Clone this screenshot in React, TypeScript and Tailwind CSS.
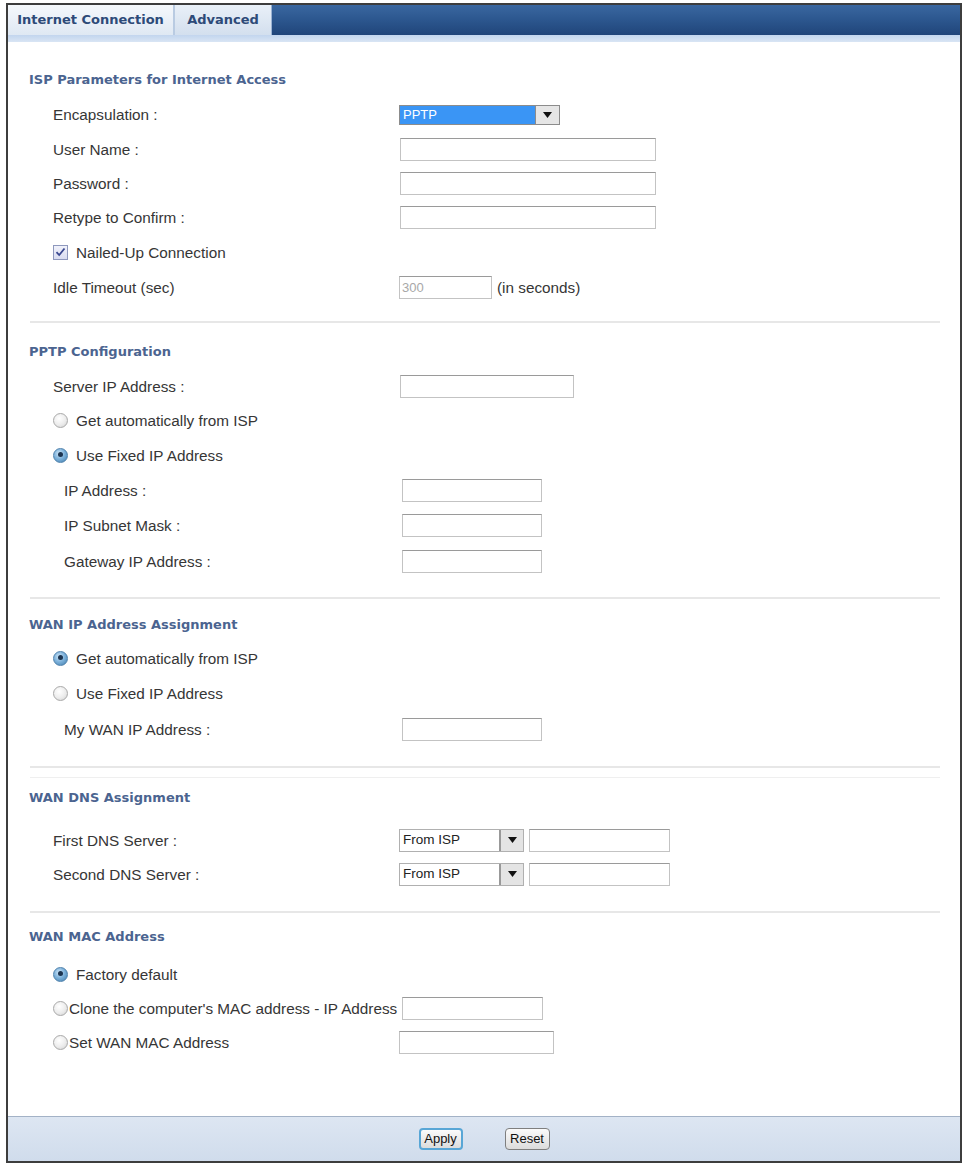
import React from "react";

const LBL = "font-['Liberation_Sans',Arial,sans-serif] text-[15.3px] text-[#363636] whitespace-nowrap";
const HDR = "font-['DejaVu_Sans',Verdana,sans-serif] font-bold text-[13px] text-[#4b6490] whitespace-nowrap";
const TAB = "font-['DejaVu_Sans',Verdana,sans-serif] font-bold text-[13px] text-[#2d4a78] whitespace-nowrap";

function Input({ className, value }: { className: string; value?: string }) {
  return (
    <div
      className={
        "border border-[#c3c3c3] border-t-[#9a9a9a] bg-white flex items-center pl-[2px] font-['Liberation_Sans',Arial,sans-serif] text-[13px] text-[#a8a8a8] " +
        className
      }
    >
      {value}
    </div>
  );
}

function Arrow() {
  return (
    <svg width="9" height="6" viewBox="0 0 9 6">
      <path d="M0 0 H9 L4.5 6 Z" fill="#111" />
    </svg>
  );
}

function Radio({ on }: { on?: boolean }) {
  if (on) {
    return (
      <div className="w-[15px] h-[15px] rounded-full border border-[#4f82ad] bg-[radial-gradient(circle_at_40%_35%,#cfe6f7_0%,#7fb3dc_45%,#3f7cab_100%)] flex items-center justify-center shrink-0">
        <div className="w-[5px] h-[5px] rounded-full bg-[#1c3450] -mt-[2px]" />
      </div>
    );
  }
  return (
    <div className="w-[15px] h-[15px] rounded-full border border-[#a9a9a9] bg-[radial-gradient(circle_at_40%_35%,#ffffff_0%,#ececec_55%,#cfcfcf_100%)] shrink-0" />
  );
}

function Checkbox() {
  return (
    <div className="w-[15px] h-[15px] border border-[#8e98bd] bg-[linear-gradient(180deg,#f1f2fb,#d9dcf0)] flex items-center justify-center shrink-0">
      <svg width="11" height="10" viewBox="0 0 11 10">
        <path d="M1.5 5.2 L4.2 8 L9.5 1.5" fill="none" stroke="#3a4890" strokeWidth="1.8" />
      </svg>
    </div>
  );
}

function Row({
  h,
  label,
  sub,
  children,
}: {
  h: string;
  label?: React.ReactNode;
  sub?: boolean;
  children?: React.ReactNode;
}) {
  return (
    <div className={"grid grid-cols-[391px_1fr] items-center " + h}>
      <div className={(sub ? "pl-[56px] " : "pl-[45px] ") + "pt-[2px] " + LBL}>{label}</div>
      <div className="flex items-center">{children}</div>
    </div>
  );
}

function RadioRow({ h, on, text }: { h: string; on?: boolean; text: string }) {
  return (
    <div className={"flex items-center pl-[45px] " + h}>
      <Radio on={on} />
      <span className={"ml-[8px] pt-[2px] " + LBL}>{text}</span>
    </div>
  );
}

function Header({ h, text }: { h: string; text: string }) {
  return (
    <div className={"flex items-center pl-[21px] " + h}>
      <span className={HDR}>{text}</span>
    </div>
  );
}

function DnsSelect() {
  return (
    <div className="w-[125px] h-[23px] border border-[#b0b0b0] flex">
      <div className="flex-1 flex items-center pl-[3px] font-['Liberation_Sans',Arial,sans-serif] text-[13.5px] text-[#222]">
        From ISP
      </div>
      <div className="w-[24px] bg-[#e4e4e4] border-l-2 border-[#999] flex items-center justify-center">
        <Arrow />
      </div>
    </div>
  );
}

function Sep({ h, pt }: { h: string; pt: string }) {
  return (
    <div className={"pl-[22px] pr-[20px] " + h + " " + pt}>
      <div className="h-[2px] bg-[#e7e7e7]" />
    </div>
  );
}

export default function App() {
  return (
    <div className="w-[965px] h-[1167px] bg-white overflow-hidden">
      <div className="ml-[6px] mt-[3px] w-[956px] h-[1160px] border-2 border-[#3d3d3d] flex flex-col bg-white">
        {/* tab bar */}
        <div className="h-[30px] flex bg-[linear-gradient(180deg,#3a67a0_0%,#2d5890_45%,#20457a_100%)]">
          <div className="w-[167px] h-full flex items-center justify-center bg-[linear-gradient(180deg,#f5f8fc_0%,#dfe8f3_100%)] border-r-2 border-[#b9cbe2]">
            <span className={TAB}>Internet Connection</span>
          </div>
          <div className="w-[97px] h-full flex items-center justify-center bg-[linear-gradient(180deg,#e9f0f8_0%,#d3dfee_100%)] border-r border-[#9bb3d3]">
            <span className={TAB}>Advanced</span>
          </div>
          <div className="flex-1" />
        </div>
        <div className="h-[7px] bg-[linear-gradient(180deg,#c2d5ee_0%,#d9e5f4_100%)]" />

        {/* content */}
        <div className="flex-1 flex flex-col">
          <div className="h-[21px]" />
          <Header h="h-[34px]" text="ISP Parameters for Internet Access" />
          <Row h="h-[35px]" label="Encapsulation :">
            <div className="w-[161px] h-[20px] border border-[#8c8c8c] flex">
              <div className="flex-1 bg-[#3a95f5] flex items-center pl-[3px] font-['Liberation_Sans',Arial,sans-serif] text-[13px] text-white">
                PPTP
              </div>
              <div className="w-[24px] bg-[#e6e6e6] border-l border-[#8c8c8c] flex items-center justify-center">
                <Arrow />
              </div>
            </div>
          </Row>
          <Row h="h-[34px]" label="User Name :">
            <Input className="w-[256px] h-[23px] ml-[1px]" />
          </Row>
          <Row h="h-[34px]" label="Password :">
            <Input className="w-[256px] h-[23px] ml-[1px]" />
          </Row>
          <Row h="h-[34px]" label="Retype to Confirm :">
            <Input className="w-[256px] h-[23px] ml-[1px]" />
          </Row>
          <div className="h-[36px] flex items-center pl-[45px]">
            <Checkbox />
            <span className={"ml-[8px] pt-[2px] " + LBL}>Nailed-Up Connection</span>
          </div>
          <Row h="h-[35px]" label="Idle Timeout (sec)">
            <Input className="w-[93px] h-[23px]" value="300" />
            <span className={"ml-[5px] pt-[2px] " + LBL}>(in seconds)</span>
          </Row>
          <Sep h="h-[31px]" pt="pt-[16px]" />

          <Header h="h-[32px]" text="PPTP Configuration" />
          <Row h="h-[36px]" label="Server IP Address :">
            <Input className="w-[174px] h-[23px] ml-[1px]" />
          </Row>
          <RadioRow h="h-[33px]" text="Get automatically from ISP" />
          <RadioRow h="h-[36px]" on text="Use Fixed IP Address" />
          <Row h="h-[35px]" sub label="IP Address :">
            <Input className="w-[140px] h-[23px] ml-[3px]" />
          </Row>
          <Row h="h-[35px]" sub label="IP Subnet Mask :">
            <Input className="w-[140px] h-[23px] ml-[3px]" />
          </Row>
          <Row h="h-[37px]" sub label="Gateway IP Address :">
            <Input className="w-[140px] h-[23px] ml-[3px]" />
          </Row>
          <Sep h="h-[31px]" pt="pt-[17px]" />

          <Header h="h-[27px]" text="WAN IP Address Assignment" />
          <RadioRow h="h-[40px]" on text="Get automatically from ISP" />
          <RadioRow h="h-[30px]" text="Use Fixed IP Address" />
          <Row h="h-[42px]" sub label="My WAN IP Address :">
            <Input className="w-[140px] h-[23px] ml-[3px]" />
          </Row>
          <div className="h-[36px] pt-[16px] pl-[22px] pr-[20px]">
            <div className="h-[2px] bg-[#e7e7e7]" />
            <div className="h-[9px]" />
            <div className="h-[1px] bg-[#efefef]" />
          </div>

          <Header h="h-[24px]" text="WAN DNS Assignment" />
          <div className="h-[13px]" />
          <Row h="h-[34px]" label="First DNS Server :">
            <DnsSelect />
            <Input className="w-[141px] h-[23px] ml-[5px]" />
          </Row>
          <Row h="h-[34px]" label="Second DNS Server :">
            <DnsSelect />
            <Input className="w-[141px] h-[23px] ml-[5px]" />
          </Row>
          <Sep h="h-[34px]" pt="pt-[20px]" />

          <Header h="h-[24px]" text="WAN MAC Address" />
          <div className="h-[8px]" />
          <RadioRow h="h-[34px]" on text="Factory default" />
          <div className="h-[34px] flex items-center pl-[45px]">
            <Radio />
            <span className={"ml-[1px] pt-[2px] " + LBL}>Clone the computer's MAC address - IP Address</span>
            <Input className="w-[141px] h-[23px] ml-[5px]" />
          </div>
          <div className="h-[34px] grid grid-cols-[391px_1fr] items-center">
            <div className="pl-[45px] flex items-center">
              <Radio />
              <span className={"ml-[1px] pt-[2px] " + LBL}>Set WAN MAC Address</span>
            </div>
            <div className="flex items-center">
              <Input className="w-[155px] h-[23px]" />
            </div>
          </div>
          <div className="flex-1" />
        </div>

        {/* footer */}
        <div className="h-[45px] border-t border-[#a3b2c6] bg-[linear-gradient(180deg,#dde6f2_0%,#d0dcec_100%)] flex items-center justify-center gap-[42px]">
          <div className="w-[44px] h-[22px] rounded-[4px] border-2 border-[#58a6d6] bg-[linear-gradient(180deg,#fbfbfb,#dcdcdc)] flex items-center justify-center font-['Liberation_Sans',Arial,sans-serif] text-[13px] text-[#111]">
            Apply
          </div>
          <div className="w-[45px] h-[22px] rounded-[4px] border border-[#7f7f7f] bg-[linear-gradient(180deg,#fbfbfb,#dcdcdc)] flex items-center justify-center font-['Liberation_Sans',Arial,sans-serif] text-[13px] text-[#111]">
            Reset
          </div>
        </div>
      </div>
    </div>
  );
}
